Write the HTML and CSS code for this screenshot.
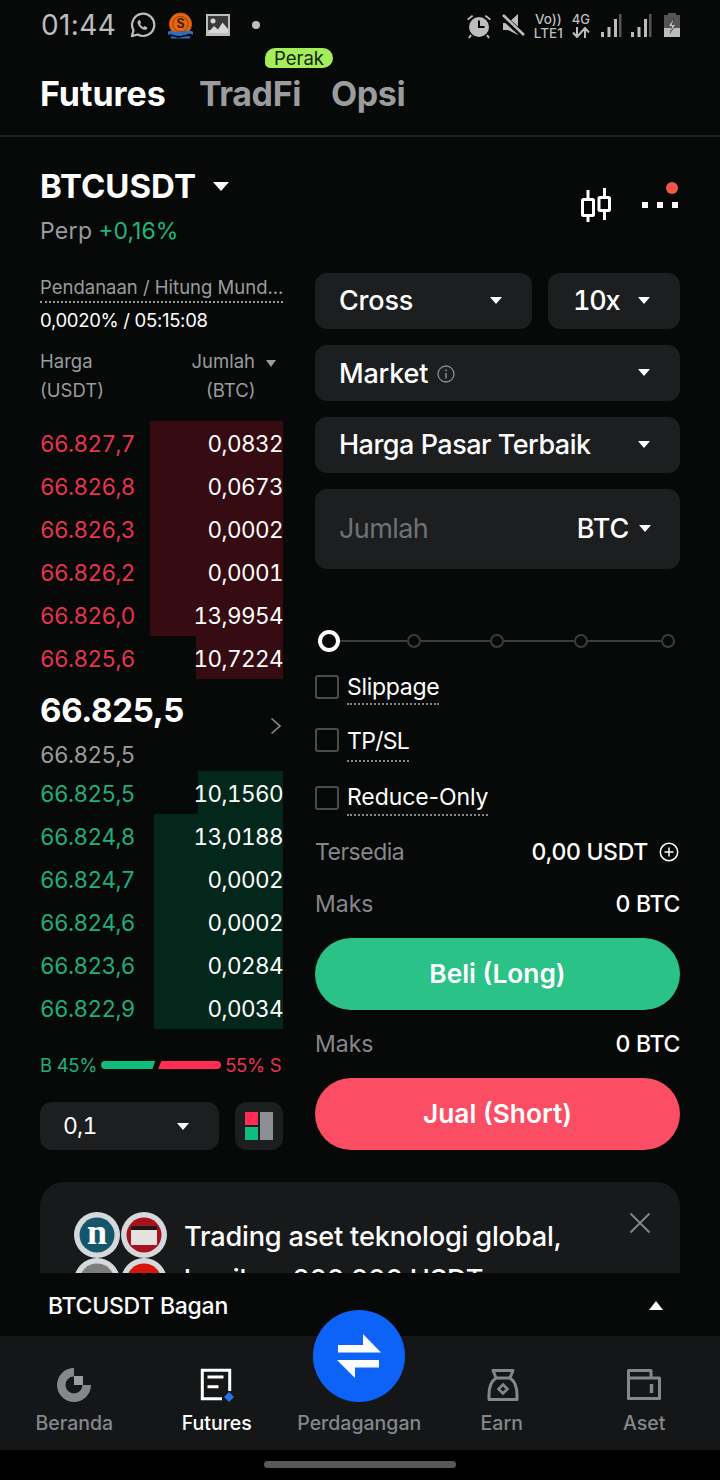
FILE: index.html
```html
<!DOCTYPE html>
<html lang="id">
<head>
<meta charset="utf-8">
<title>Futures</title>
<link rel="stylesheet" href="styles.css">
</head>
<body>
<div class="main">
  <div class="status">
    <span class="time">01:44</span>
    <svg class="ic-wa" viewBox="0 0 28 28"><path d="M3 25l1.700-6A11.500 11.500 0 1 1 9 23.300z" fill="none" stroke="#bdbdbd" stroke-width="2.300" stroke-linejoin="round"/><path d="M10 8.500c-1.500 1-1.500 3 0 5.500 1.700 2.800 4 4.300 6.300 4.500 1.700 0 2.800-1.200 2.700-2.500l-2.800-1.400-1.200 1.300c-1.500-.6-2.800-1.900-3.500-3.500l1-1.200-1.200-2.800z" fill="#bdbdbd"/></svg>
    <svg class="ic-s" viewBox="0 0 28 28"><circle cx="14" cy="12" r="11.500" fill="#e8660f" stroke="#c9530a"/><circle cx="14" cy="12" r="8" fill="none" stroke="#8a3a08" stroke-width="1"/><text x="14" y="16" text-anchor="middle" class="s-letter">S</text><path d="M1 20c4-3 6 1 13 0s9-2 13 0v3c-4-2-7 0-13 1s-9-3-13-1z" fill="#2a6fc4"/><path d="M4 25c4-1 6 2 10 1s6-2 10-1v2H4z" fill="#2a6fc4"/></svg>
    <svg class="ic-img" viewBox="0 0 24 22"><path d="M0 0h24v22H0z" fill="#bdbdbd"/><path d="M2 2h20v14H2z" fill="#3a3a3a"/><circle cx="7" cy="7" r="2.500" fill="#d8d8d8"/><path d="M2 19l6-7 4 3.500 4.500-7 5.500 6.500v4z" fill="#d8d8d8"/></svg>
    <span class="dot"></span>
    <span class="status-right">
      <svg class="ic-alarm" viewBox="0 0 26 26"><path d="M1 6l5-4 1.300 1.300-5 4zM25 6l-5-4-1.300 1.300 5 4z" fill="#bdbdbd"/><circle cx="13" cy="14" r="10" fill="#bdbdbd"/><path d="M13 7.500V14h5.500" fill="none" stroke="#070808" stroke-width="2"/><path d="M5 22l-2 3M21 22l2 3" stroke="#bdbdbd" stroke-width="2"/></svg>
      <svg class="ic-mute" viewBox="0 0 24 24"><path d="M1 10h5L16 1v21L6 17H1z" fill="#bdbdbd"/><path d="M0 3l22 20" stroke="#070808" stroke-width="6"/><path d="M1 2l21 20" stroke="#bdbdbd" stroke-width="2.600"/></svg>
      <span class="net"><span>Vo))</span><span>LTE1</span></span>
      <span class="net net-4g"><span>4G</span><svg class="ic-arrows" viewBox="0 0 18 11"><path d="M5 0v9M1 5.500l4 4.500 4-4.500M13 11V2M9 5.500L13 1l4 4.500" fill="none" stroke="#bdbdbd" stroke-width="2"/></svg></span>
      <svg class="ic-sig" viewBox="0 0 22 24"><rect x="1" y="19" width="3" height="5" fill="#bdbdbd"/><rect x="7.500" y="14" width="3" height="10" fill="#bdbdbd"/><rect x="14" y="6" width="3" height="18" fill="#bdbdbd"/><rect x="19" y="1" width="2.500" height="23" fill="#555"/></svg>
      <svg class="ic-sig" viewBox="0 0 22 24"><rect x="1" y="19" width="3" height="5" fill="#bdbdbd"/><rect x="7.500" y="14" width="3" height="10" fill="#bdbdbd"/><rect x="14" y="6" width="3" height="18" fill="#bdbdbd"/><rect x="19" y="1" width="2.500" height="23" fill="#555"/></svg>
      <svg class="ic-bat" viewBox="0 0 16 24"><path d="M4 0h8v2h4v22H0V2h4z" fill="#555"/><path d="M0 15h16v9H0z" fill="#bdbdbd"/><path d="M10 5l-6 9h3.500L5.500 21l6.500-9H8.500z" fill="#070808"/><path d="M9.500 6l-5 7.500h3.500L6 19.500l5.500-7.500H8z" fill="#bdbdbd"/></svg>
    </span>
  </div>

  <nav class="tabs">
    <span class="tab tab-on">Futures</span>
    <span class="tab">TradFi</span>
    <span class="tab">Opsi</span>
    <span class="badge">Perak</span>
  </nav>

  <header class="head">
    <div>
      <div class="symbol"><span>BTCUSDT</span><i class="caret caret-l"></i></div>
      <div class="perp"><span class="perp-l">Perp</span><span class="perp-v">+0,16%</span></div>
    </div>
    <div class="head-icons">
      <svg class="ic-candle" viewBox="0 0 30 34"><path d="M7 2v9M7 28v6M23.500 0v9M23.500 22v10" stroke="#fff" stroke-width="3"/><rect x="1.500" y="11.500" width="11" height="16" fill="none" stroke="#fff" stroke-width="3" rx="1"/><rect x="18" y="9.500" width="10.500" height="13" fill="none" stroke="#fff" stroke-width="3" rx="1"/></svg>
      <span class="more"><i></i><i></i><i></i><b></b></span>
    </div>
  </header>

  <div class="trade">
    <section class="book">
      <div class="fund-l">Pendanaan / Hitung Mund...</div>
      <div class="fund-v">0,0020% / 05:15:08</div>
      <div class="book-h">
        <div>Harga<br>(USDT)</div>
        <div class="book-hr"><div>Jumlah<i class="caret caret-xs"></i></div><div class="book-btc">(BTC)</div></div>
      </div>
      <div class="rows asks">
        <div class="row"><span class="depth" style="width:133px"></span><span class="p">66.827,7</span><span class="q">0,0832</span></div>
        <div class="row"><span class="depth" style="width:133px"></span><span class="p">66.826,8</span><span class="q">0,0673</span></div>
        <div class="row"><span class="depth" style="width:133px"></span><span class="p">66.826,3</span><span class="q">0,0002</span></div>
        <div class="row"><span class="depth" style="width:133px"></span><span class="p">66.826,2</span><span class="q">0,0001</span></div>
        <div class="row"><span class="depth" style="width:133px"></span><span class="p">66.826,0</span><span class="q">13,9954</span></div>
        <div class="row"><span class="depth" style="width:87px"></span><span class="p">66.825,6</span><span class="q">10,7224</span></div>
      </div>
      <div class="mid">
        <div>
          <div class="mid-p">66.825,5</div>
          <div class="mid-s">66.825,5</div>
        </div>
        <svg class="chev" viewBox="0 0 12 18"><path d="M1.500 1.500L10 9l-8.500 7.500" fill="none" stroke="#8a8c8e" stroke-width="1.600"/></svg>
      </div>
      <div class="rows bids">
        <div class="row"><span class="depth" style="width:85px"></span><span class="p">66.825,5</span><span class="q">10,1560</span></div>
        <div class="row"><span class="depth" style="width:129px"></span><span class="p">66.824,8</span><span class="q">13,0188</span></div>
        <div class="row"><span class="depth" style="width:129px"></span><span class="p">66.824,7</span><span class="q">0,0002</span></div>
        <div class="row"><span class="depth" style="width:129px"></span><span class="p">66.824,6</span><span class="q">0,0002</span></div>
        <div class="row"><span class="depth" style="width:129px"></span><span class="p">66.823,6</span><span class="q">0,0284</span></div>
        <div class="row"><span class="depth" style="width:129px"></span><span class="p">66.822,9</span><span class="q">0,0034</span></div>
      </div>
      <div class="ratio">
        <span class="r-b">B 45%</span>
        <span class="bar bar-g"></span>
        <span class="bar bar-r"></span>
        <span class="r-s">55% S</span>
      </div>
      <div class="book-foot">
        <div class="step"><span>0,1</span><i class="caret caret-s"></i></div>
        <div class="layout-btn"><span class="lb-a"></span><span class="lb-b"></span><span class="lb-c"></span></div>
      </div>
    </section>

    <section class="form">
      <div class="sel-row">
        <div class="sel sel-grow"><span>Cross</span><i class="caret caret-s"></i></div>
        <div class="sel sel-lev"><span>10x</span><i class="caret caret-s"></i></div>
      </div>
      <div class="sel"><span class="sel-info">Market<svg class="ic-info" viewBox="0 0 18 18"><circle cx="9" cy="9" r="8" fill="none" stroke="#8a8c8e" stroke-width="1.300"/><path d="M9 8v5.500M9 4.500v1.800" stroke="#8a8c8e" stroke-width="1.500"/></svg></span><i class="caret caret-s"></i></div>
      <div class="sel sel-best"><span>Harga Pasar Terbaik</span><i class="caret caret-s"></i></div>
      <div class="sel sel-tall"><span class="ph">Jumlah</span><span class="unit">BTC<i class="caret caret-s"></i></span></div>
      <div class="slider"><span class="knob"></span><span class="seg seg-a"></span><span class="node"></span><span class="seg"></span><span class="node"></span><span class="seg"></span><span class="node"></span><span class="seg seg-z"></span><span class="node"></span></div>
      <div class="check c1"><span class="box"></span><span class="lbl">Slippage</span></div>
      <div class="check c2"><span class="box"></span><span class="lbl">TP/SL</span></div>
      <div class="check c3"><span class="box"></span><span class="lbl">Reduce-Only</span></div>
      <div class="kv kv-a"><span class="k">Tersedia</span><span class="v">0,00 USDT<svg class="ic-plus" viewBox="0 0 20 20"><circle cx="10" cy="10" r="8.700" fill="none" stroke="#fff" stroke-width="1.500"/><path d="M10 5.500v9M5.500 10h9" stroke="#fff" stroke-width="1.500"/></svg></span></div>
      <div class="kv kv-b"><span class="k">Maks</span><span class="v">0 BTC</span></div>
      <div class="btn btn-buy">Beli (Long)</div>
      <div class="kv kv-c"><span class="k">Maks</span><span class="v">0 BTC</span></div>
      <div class="btn btn-sell">Jual (Short)</div>
    </section>
  </div>

  <aside class="banner">
    <svg class="coins" viewBox="0 0 94 94">
      <circle cx="23" cy="23" r="23" fill="#d5d9dd"/><circle cx="23" cy="23" r="17.500" fill="#14566b"/><text x="23" y="32" text-anchor="middle" class="coin-n">n</text>
      <circle cx="70" cy="23" r="23" fill="#d5d9dd"/><circle cx="70" cy="23" r="17.500" fill="#a5141c"/><rect x="57" y="18" width="26" height="15" fill="#e6e0de"/><rect x="57" y="14" width="26" height="4" fill="#1d1414"/>
      <circle cx="23" cy="69" r="23" fill="#d5d9dd"/><circle cx="23" cy="69" r="17.500" fill="#7d7d7d"/>
      <circle cx="70" cy="69" r="23" fill="#d5d9dd"/><circle cx="70" cy="69" r="17.500" fill="#d8140f"/>
    </svg>
    <div class="banner-t">Trading aset teknologi global,<br>bagikan 200.000 USDT</div>
    <svg class="ic-x" viewBox="0 0 22 22"><path d="M1.500 1.500l19 19M20.500 1.500l-19 19" stroke="#85878a" stroke-width="1.800"/></svg>
  </aside>
</div>

<div class="chart-bar"><span>BTCUSDT Bagan</span><i class="caret-up"></i></div>

<footer class="tabbar">
  <div class="item">
    <svg viewBox="0 0 36 36"><path d="M18 1A17 17 0 1 0 35 18H26.500A8.500 8.500 0 1 1 18 9.500z" fill="#85878a"/><path d="M18 9h9v9h-9z" fill="#9a9c9e"/></svg>
    <span>Beranda</span>
  </div>
  <div class="item item-on">
    <svg viewBox="0 0 36 36"><path d="M30.700 24V3.300H3.300v28.400H23" fill="none" stroke="#fff" stroke-width="3"/><path d="M8.500 10h16M8.500 19.700h11" stroke="#fff" stroke-width="3"/><path d="M30 25l5 5-5 5-5-5z" fill="#2575e8"/></svg>
    <span>Futures</span>
  </div>
  <div class="item item-gap"><span>Perdagangan</span></div>
  <div class="item">
    <svg viewBox="0 0 36 36"><path d="M9 3.500h20L26 11c4.500 3 7 10 7 17v4.500H5V28c0-7 2.500-14 7-17z" fill="none" stroke="#85878a" stroke-width="3" stroke-linejoin="round"/><path d="M12 11h14" stroke="#85878a" stroke-width="3"/><path d="M19 17.500l4.500 4.500-4.500 4.500-4.500-4.500z" fill="none" stroke="#85878a" stroke-width="2.600"/></svg>
    <span>Earn</span>
  </div>
  <div class="item">
    <svg viewBox="0 0 36 36"><path d="M2.500 11V3.500H25V11M2.500 11h31v20.500h-31z" fill="none" stroke="#85878a" stroke-width="3" stroke-linejoin="round"/><path d="M25.500 17v9" stroke="#85878a" stroke-width="3.500"/></svg>
    <span>Aset</span>
  </div>
  <div class="fab"><svg viewBox="0 0 46 46"><path d="M2 12h25V1l18 18.500H2z" fill="#fff"/><path d="M1 27h42v7.500H19V45z" fill="#fff"/></svg></div>
</footer>
<div class="home"><span></span></div>
</body>
</html>
```

FILE: styles.css
```css
* { box-sizing: border-box; }
html, body { margin: 0; padding: 0; height: 1480px; overflow: hidden; background: #070808; color: #fff; font-family: Inter, "Liberation Sans", sans-serif; }
i { display: block; }
svg { display: block; flex: none; }

.main { height: 1273px; overflow: hidden; }

/* status bar */
.status { height: 50px; padding: 10px 40px 0 41px; display: flex; align-items: flex-start; color: #bdbdbd; }
.time { font-size: 28px; line-height: 30px; width: 88px; letter-spacing: .4px; }
.ic-wa { width: 27px; height: 27px; margin: 2px 0 0 0; }
.ic-s { width: 27px; height: 28px; margin: 2px 0 0 11px; }
.s-letter { font-size: 13px; font-weight: 700; fill: #4a1a05; font-family: Inter, sans-serif; }
.ic-img { width: 24px; height: 22px; margin: 4px 0 0 12px; }
.dot { width: 8px; height: 8px; border-radius: 50%; background: #bdbdbd; margin: 11px 0 0 22px; }
.status-right { margin-left: auto; display: flex; align-items: flex-start; }
.ic-alarm { width: 26px; height: 26px; margin: 3px 0 0 0; }
.ic-mute { width: 24px; height: 24px; margin: 3px 0 0 10px; }
.net { display: flex; flex-direction: column; align-items: center; font-size: 13.500px; line-height: 14px; font-weight: 500; margin: 2px 0 0 8px; }
.net-4g { margin: 3px 0 0 9px; font-size: 13px; line-height: 13px; }
.ic-arrows { width: 18px; height: 11px; margin-top: 1px; }
.ic-sig { width: 22px; height: 24px; margin: 3px 0 0 10px; }
.ic-sig + .ic-sig { margin-left: 8px; }
.ic-bat { width: 16px; height: 24px; margin: 3px 0 0 12px; }

/* tabs */
.tabs { position: relative; height: 87px; padding: 23px 40px 0; display: flex; gap: 30px; border-bottom: 2px solid #1e2022; }
.tab { font-size: 34px; line-height: 42px; font-weight: 700; color: #9a9c9e; letter-spacing: -.4px; }
.tab-on { color: #fff; letter-spacing: 0; margin-right: 3px; }
.badge { position: absolute; left: 265px; top: -2px; width: 68px; height: 20px; border-radius: 10px 10px 10px 5px; background: #a4ee5a; color: #12250a; font-size: 18.500px; line-height: 20px; text-align: center; }

/* header */
.head { height: 136px; padding: 0 40px; display: flex; justify-content: space-between; }
.symbol { display: flex; align-items: center; gap: 17px; margin-top: 29px; font-size: 33px; line-height: 40px; font-weight: 700; }
.perp { margin-top: 10px; font-size: 23px; line-height: 30px; }
.perp-l { color: #9a9c9e; letter-spacing: .3px; }
.perp-v { color: #20b67f; margin-left: 6px; }
.head-icons { display: flex; align-items: flex-start; }
.ic-candle { width: 30px; height: 34px; margin: 51px 0 0 0; }
.more { position: relative; display: flex; gap: 9px; margin: 65px 2px 0 31px; height: 6px; }
.more i { width: 6px; height: 6px; background: #fff; }
.more b { position: absolute; right: 0; top: -20px; width: 12px; height: 12px; border-radius: 50%; background: #f0574e; }

/* carets */
.caret { width: 0; height: 0; border-style: solid; border-color: #fff transparent transparent; }
.caret-l { border-width: 9px 8px 0; }
.caret-s { border-width: 7px 6px 0; }
.caret-xs { border-width: 7px 5.500px 0; border-top-color: #9a9c9e; margin-left: 11px; margin-top: 4px; }

/* layout */
.trade { display: grid; grid-template-columns: 243px 365px; gap: 32px; padding: 0 40px; }

/* book */
.book { min-width: 0; }
.fund-l { height: 30px; font-size: 18.500px; line-height: 28px; color: #9a9c9e; border-bottom: 2px dotted #9a9c9e; white-space: nowrap; overflow: hidden; }
.fund-v { font-size: 18.500px; line-height: 24px; margin-top: 5px; letter-spacing: -.3px; }
.book-h { display: flex; justify-content: space-between; margin-top: 15px; font-size: 18.500px; line-height: 29px; color: #9a9c9e; height: 74px; }
.book-hr { text-align: center; margin-right: 7px; }
.book-hr > div:first-child { display: flex; align-items: center; }
.book-btc { padding-right: 6px; }
.row { position: relative; height: 43px; padding-top: 2px; display: flex; justify-content: space-between; align-items: center; font-size: 22.500px; font-variant-numeric: tabular-nums; letter-spacing: -.6px; }
.depth { position: absolute; right: 0; top: 0; bottom: 0; }
.p, .q { position: relative; }
.q { color: #fff; }
.asks .p { color: #e8344f; }
.bids .p { color: #1fae7c; }
.asks .depth { background: #360b12; }
.bids .depth { background: #04271b; }
.mid { height: 92px; display: flex; justify-content: space-between; align-items: flex-start; }
.mid-p { font-size: 33px; line-height: 40px; font-weight: 700; margin-top: 11px; letter-spacing: -.3px; }
.mid-s { font-size: 22.500px; line-height: 30px; color: #9a9c9e; margin-top: 10px; letter-spacing: -.6px; font-variant-numeric: tabular-nums; }
.chev { width: 12px; height: 18px; margin: 38px 1px 0 0; }
.ratio { display: flex; align-items: center; height: 24px; margin-top: 24px; font-size: 18.500px; }
.r-b { color: #1fae7c; margin-right: 4px; letter-spacing: -.3px; white-space: nowrap; }
.r-s { color: #e8344f; margin-left: 4px; letter-spacing: -.3px; white-space: nowrap; }
.bar { height: 8px; flex: none; }
.bar-g { width: 54px; background: #0fbe7c; border-radius: 4px 0 0 4px; clip-path: polygon(0 0, 100% 0, 95% 100%, 0 100%); }
.bar-r { width: 63px; margin-left: 3px; background: #ff2c55; border-radius: 0 4px 4px 0; clip-path: polygon(5% 0, 100% 0, 100% 100%, 0 100%); }
.book-foot { display: flex; gap: 16px; margin-top: 25px; }
.step { width: 179px; height: 48px; border-radius: 12px; background: #1c1e20; display: flex; align-items: center; justify-content: space-between; padding: 0 30px 0 23px; font-size: 23px; font-variant-numeric: tabular-nums; letter-spacing: -.8px; }
.layout-btn { width: 48px; height: 48px; border-radius: 12px; background: #1c1e20; display: grid; grid-template: 13px 13px / 13px 13px; gap: 2px 2px; padding: 10px 10px; align-content: center; }
.lb-a { background: #ff2c55; }
.lb-b { background: #8d8f92; grid-row: 1 / 3; grid-column: 2; }
.lb-c { background: #0fbe7c; }

/* form */
.form { display: flex; flex-direction: column; }
.sel-row { display: flex; gap: 16px; }
.sel { height: 56px; margin-bottom: 16px; border-radius: 12px; background: #1c1e20; display: flex; align-items: center; justify-content: space-between; padding: 0 30px 1px 24px; font-size: 27px; font-weight: 500; letter-spacing: -.2px; }
.sel-grow { flex: 1; }
.sel-lev { width: 132px; padding: 0 30px 1px 25px; font-variant-numeric: tabular-nums; letter-spacing: -1.300px; }
.sel-best { letter-spacing: -.5px; }
.sel-info { display: flex; align-items: center; gap: 9px; padding-top: 2px; }
.ic-info { width: 18px; height: 18px; }
.sel-tall { height: 80px; margin-bottom: 0; }
.ph { color: #6f7173; font-weight: 400; letter-spacing: -.6px; }
.unit { display: flex; align-items: center; gap: 10px; font-size: 27px; margin-right: -1px; }
.slider { display: flex; align-items: center; height: 22px; margin-top: 61px; padding-left: 3px; }
.knob { width: 22px; height: 22px; border-radius: 50%; border: 4px solid #fff; flex: none; }
.node { width: 14px; height: 14px; border-radius: 50%; border: 2px solid #3a3c3e; flex: none; }
.seg { flex: none; width: 69.300px; height: 2px; background: #3a3c3e; }
.seg-a { width: 67px; }
.seg-z { width: 73px; }
.check { display: flex; align-items: flex-start; }
.c1 { margin-top: 23px; }
.c2 { margin-top: 23px; }
.c3 { margin-top: 24px; }
.box { width: 24px; height: 24px; border: 2px solid #4a4c4e; border-radius: 3px; margin-right: 8px; }
.lbl { font-size: 23px; line-height: 32px; border-bottom: 2px dotted #85878a; margin-top: -5px; height: 35px; letter-spacing: -.1px; }
.c1 .lbl { margin-top: -4px; height: 34px; letter-spacing: -.3px; }
.c2 .lbl { height: 37px; margin-top: -3px; letter-spacing: -.7px; }
.kv { display: flex; justify-content: space-between; align-items: center; height: 30px; padding-top: 2px; font-size: 23px; }
.kv-a { margin-top: 20px; }
.kv-a .k { letter-spacing: -.5px; }
.kv-b { margin-top: 22px; }
.kv-c { margin-top: 18px; }
.k { color: #85878a; }
.v { display: flex; align-items: center; gap: 11px; font-weight: 500; letter-spacing: -.3px; }
.ic-plus { width: 20px; height: 20px; margin-right: 1px; }
.btn { height: 72px; border-radius: 36px; display: flex; align-items: center; justify-content: center; padding-bottom: 2px; font-size: 26.300px; font-weight: 600; }
.btn-buy { background: #2bc287; margin-top: 20px; }
.btn-sell { background: #fb4d63; margin-top: 20px; }

/* banner */
.banner { position: relative; margin: 32px 40px 0; height: 200px; border-radius: 24px; background: #17191b; padding: 30px 0 0 34px; display: flex; gap: 16px; }
.coins { width: 94px; height: 94px; }
.coin-n { font-family: "Liberation Serif", serif; font-size: 36px; font-weight: 700; fill: #fff; }
.banner-t { font-size: 27.200px; line-height: 43px; margin-top: 3px; font-weight: 500; letter-spacing: -.2px; white-space: nowrap; }
.ic-x { position: absolute; right: 29px; top: 30px; width: 22px; height: 22px; }

/* bottom */
.chart-bar { height: 63px; padding: 2px 57px 0 48px; display: flex; align-items: center; justify-content: space-between; font-size: 23px; font-weight: 500; letter-spacing: -.25px; }
.caret-up { width: 0; height: 0; border-style: solid; border-width: 0 7.500px 9px; border-color: transparent transparent #fff; }
.tabbar { position: relative; height: 114px; background: #141618; display: grid; grid-template-columns: repeat(5, 142.500px); padding-left: 3px; }
.item { display: flex; flex-direction: column; align-items: center; color: #85878a; font-size: 19.500px; font-weight: 500; }
.item svg { width: 36px; height: 36px; margin-top: 31px; }
.item span { line-height: 26px; margin-top: 7px; white-space: nowrap; }
.item-on { color: #fff; }
.item-gap span { margin-top: 74px; }
.fab { position: absolute; left: 313px; top: -26px; width: 92px; height: 92px; border-radius: 50%; background: #0d62f8; display: flex; align-items: center; justify-content: center; }
.fab svg { width: 46px; height: 46px; margin: 0; }
.home { height: 30px; background: #000; display: flex; justify-content: center; padding-top: 11px; }
.home span { width: 192px; height: 7px; border-radius: 4px; background: #58595b; }
```
